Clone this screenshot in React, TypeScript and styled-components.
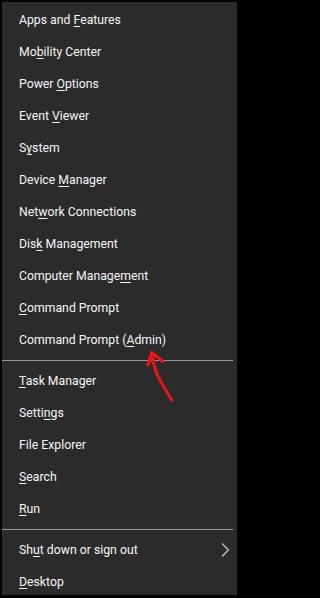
import React from 'react';
import styled, { createGlobalStyle } from 'styled-components';

const GlobalStyle = createGlobalStyle`
  html, body {
    margin: 0;
    padding: 0;
    background: #000;
  }
`;

type Entry =
  | { kind: 'item'; label: string; key: number; submenu?: boolean }
  | { kind: 'sep' };

// key = index of the mnemonic letter (-1 for none)
const entries: Entry[] = [
  { kind: 'item', label: 'Apps and Features', key: 9 },
  { kind: 'item', label: 'Mobility Center', key: 2 },
  { kind: 'item', label: 'Power Options', key: 6 },
  { kind: 'item', label: 'Event Viewer', key: 6 },
  { kind: 'item', label: 'System', key: 1 },
  { kind: 'item', label: 'Device Manager', key: 7 },
  { kind: 'item', label: 'Network Connections', key: 3 },
  { kind: 'item', label: 'Disk Management', key: 3 },
  { kind: 'item', label: 'Computer Management', key: 15 },
  { kind: 'item', label: 'Command Prompt', key: 0 },
  { kind: 'item', label: 'Command Prompt (Admin)', key: 16 },
  { kind: 'sep' },
  { kind: 'item', label: 'Task Manager', key: 0 },
  { kind: 'item', label: 'Settings', key: 5 },
  { kind: 'item', label: 'File Explorer', key: -1 },
  { kind: 'item', label: 'Search', key: 0 },
  { kind: 'item', label: 'Run', key: 0 },
  { kind: 'sep' },
  { kind: 'item', label: 'Shut down or sign out', key: 2, submenu: true },
  { kind: 'item', label: 'Desktop', key: 0 },
];

const Menu = styled.div`
  position: relative;
  box-sizing: border-box;
  width: 240px;
  height: 598px;
  background: #2b2b2b;
  border-style: solid;
  border-color: #000;
  border-width: 2px 3px 3px 2px;
  padding-top: 2px;
  display: flex;
  flex-direction: column;
  font-family: Roboto, 'Noto Sans', sans-serif;
  font-size: 12.25px;
  color: #f6f6f6;
`;

const Row = styled.div`
  flex-shrink: 0;
  height: 32px;
  display: flex;
  align-items: center;
  justify-content: space-between;
  padding: 0 7px 0 17px;
  white-space: nowrap;
`;

const Mnemonic = styled.span`
  text-decoration: underline;
  text-underline-offset: 2px;
  text-decoration-thickness: 1px;
`;

const Separator = styled.div`
  flex-shrink: 0;
  height: 1px;
  margin: 4px 4px 4px 0;
  background: #979797;
`;

const Chevron = () => (
  <svg width="9" height="14" viewBox="0 0 9 14">
    <path d="M1 0.5 L7.5 7 L1 13.5" fill="none" stroke="#d0d0d0" strokeWidth="1.1" />
  </svg>
);

const Annotation = styled.svg`
  position: absolute;
  left: -2px;
  top: -2px;
  pointer-events: none;
`;

const Label = ({ text, k }: { text: string; k: number }) =>
  k < 0 ? (
    <span>{text}</span>
  ) : (
    <span>
      {text.slice(0, k)}
      <Mnemonic>{text[k]}</Mnemonic>
      {text.slice(k + 1)}
    </span>
  );

export default function App() {
  return (
    <>
      <GlobalStyle />
      <Menu>
        {entries.map((e, i) =>
          e.kind === 'sep' ? (
            <Separator key={i} />
          ) : (
            <Row key={i}>
              <Label text={e.label} k={e.key} />
              {e.submenu && <Chevron />}
            </Row>
          )
        )}
        <Annotation width="240" height="598" viewBox="0 0 240 598">
          <path
            d="M171.5 400 C167 391 160 382 156.5 373 C154 366 152.5 359 152 353"
            fill="none"
            stroke="#e8141c"
            strokeWidth="3.2"
            strokeLinecap="round"
          />
          <path
            d="M148 365 L151.8 352.5 L163 361.5"
            fill="none"
            stroke="#e8141c"
            strokeWidth="3.2"
            strokeLinecap="round"
            strokeLinejoin="round"
          />
        </Annotation>
      </Menu>
    </>
  );
}
